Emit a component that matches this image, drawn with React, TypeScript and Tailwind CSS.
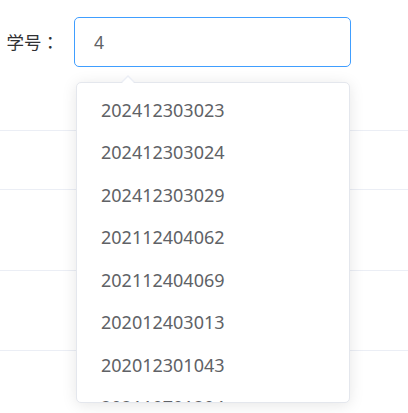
import React from "react";

const items = [
  "202412303023",
  "202412303024",
  "202412303029",
  "202112404062",
  "202112404069",
  "202012403013",
  "202012301043",
  "202110701204",
];

export default function App() {
  return (
    <div
      className="relative w-[408px] h-[413px] overflow-hidden bg-white"
      style={{ fontFamily: '"Noto Sans", "Noto Sans CJK SC", sans-serif' }}
    >
      {/* form row */}
      <div className="flex items-center pt-[17px]">
        <label
          className="w-[74px] pr-[15px] text-right text-[17.5px] text-[#303133] whitespace-nowrap"
          style={{ fontFamily: '"Noto Sans CJK TC", "Noto Sans CJK SC", sans-serif' }}
        >
          学号：
        </label>
        <div className="w-[277px] h-[50px] box-border border border-[#409eff] rounded-[5px] flex items-center pl-[19px] text-[17.5px] text-[#606266]">
          4
        </div>
      </div>

      {/* table rows underneath */}
      <div className="mt-[63px] border-t border-[#ebeef5]">
        <div className="h-[59px] box-border border-b border-[#ebeef5]" />
        <div className="h-[81px] box-border border-b border-[#ebeef5]" />
        <div className="h-[80px] box-border border-b border-[#ebeef5]" />
      </div>

      {/* autocomplete dropdown */}
      <div className="absolute left-[76px] top-[82px] w-[274px] h-[321px] box-border bg-white border border-[#e4e7ed] rounded-[5px] shadow-[0_2px_15px_0_rgba(0,0,0,0.1)]">
        {/* arrow */}
        <div className="absolute left-[44px] -top-[8px] w-0 h-0 border-x-[7.5px] border-x-transparent border-b-[7.5px] border-b-[#ebeef5]" />
        <div className="absolute left-[45px] -top-[6.5px] w-0 h-0 border-x-[6.5px] border-x-transparent border-b-[6.5px] border-b-white" />
        <div className="h-full overflow-hidden rounded-[5px]">
          <ul className="pt-[5.5px]">
            {items.map((it) => (
              <li
                key={it}
                className="h-[42.5px] leading-[42.5px] pl-[24px] text-[18px] text-[#606266] whitespace-nowrap"
              >
                {it}
              </li>
            ))}
          </ul>
        </div>
      </div>
    </div>
  );
}
